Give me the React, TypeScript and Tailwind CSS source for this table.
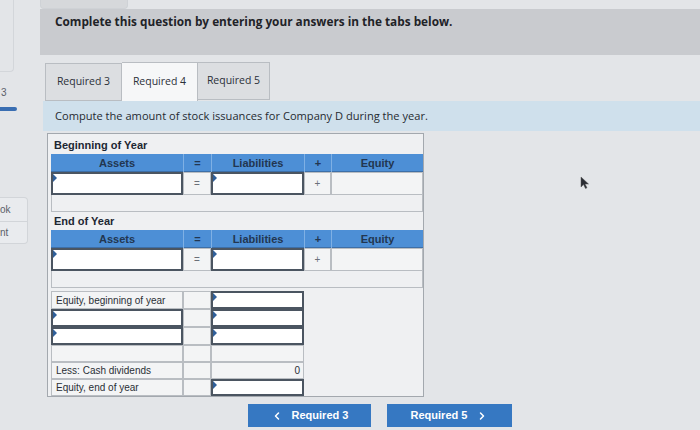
import React from "react";
import { ChevronLeft, ChevronRight } from "lucide-react";

const cols = "grid grid-cols-[132px_28px_93px_27px_92px]";

const Marker = (): React.JSX.Element => (
    <span className="absolute left-0 top-0 w-0 h-0 border-t-[4px] border-b-[4px] border-l-[4px] border-t-transparent border-b-transparent border-l-[#2f5f9a]" />
);

const Input = ({ className = "" }: { className?: string }): React.JSX.Element => (
    <div className={`relative bg-white border-2 border-[#4b5561] ${className}`}>
        <Marker />
    </div>
);

const Cell = ({ children, className = "" }: { children?: React.ReactNode; className?: string }): React.JSX.Element => (
    <div className={`border border-[#b9bdc2] bg-[#f3f4f5] flex items-center ${className}`}>{children}</div>
);

const Section = ({ title, labelH }: { title: string; labelH: string }): React.JSX.Element => (
    <div>
        <div className={`${labelH} flex items-end pl-[3px] pb-[1px] text-[11px] font-bold text-[#1d2733]`}>{title}</div>
        <div className={`${cols} h-[18px] bg-[#4d8fd6] text-[11px] font-bold text-[#223650] border-b border-[#3d6fa8]`}>
            <div className="flex items-center justify-center">Assets</div>
            <div className="flex items-center justify-center border-l border-[#7fb0e4]">=</div>
            <div className="flex items-center justify-center border-l border-[#7fb0e4]">Liabilities</div>
            <div className="flex items-center justify-center border-l border-[#7fb0e4]">+</div>
            <div className="flex items-start justify-center pt-[1px] border-l border-[#7fb0e4]">Equity</div>
        </div>
        <div className={`${cols} h-[23px] text-[10px] text-[#6b7079]`}>
            <Input />
            <Cell className="justify-center">=</Cell>
            <Input />
            <Cell className="justify-center">+</Cell>
            <Cell />
        </div>
        <div className="h-[17px] border border-t-0 border-[#b9bdc2] bg-[#eff0f2]" />
    </div>
);

const App = (): React.JSX.Element => {
    return (
        <div className="relative w-[700px] h-[430px] overflow-hidden bg-[#e3e5e8] flex font-['Liberation_Sans',Arial,sans-serif] text-[#22272e]">
            {/* left rail */}
            <div className="w-[43px] shrink-0 flex flex-col text-[10px] text-[#5b6068]">
                <div className="h-[72px] w-[14px] border-r border-b border-[#d3d6da] rounded-br" />
                <div className="pt-[16px] pl-[1px] leading-none">3</div>
                <div className="mt-[9px] w-[17px] h-[4px] rounded-r bg-[#3a6eb2]" />
                <div className="mt-[86px] w-[28px] border border-l-0 border-[#d2d5d9] rounded-r bg-[#e9ebee]">
                    <div className="h-[23px] flex items-center">ok</div>
                    <div className="h-[22px] flex items-center border-t border-[#d2d5d9]">nt</div>
                </div>
            </div>

            <div className="flex-1 flex flex-col">
                <div className="h-[9px] w-[88px] -ml-[3px] bg-[#d6d8db] rounded-b border border-t-0 border-[#cfd2d6]" />
                <div className="h-[46px] -ml-[3px] bg-[#c9cbcf] pl-[15px] pt-[4px] font-['Open_Sans',sans-serif] font-bold text-[11.8px] text-[#1f2328]">
                    Complete this question by entering your answers in the tabs below.
                </div>
                <div className="h-[7px]" />
                <div className="flex items-end h-[39px] pl-[2px] font-['Open_Sans',sans-serif] text-[10.5px] text-[#2b3038]">
                    <div className="w-[77px] h-[38px] flex items-center justify-center bg-[#dcdee1] border border-[#b9bdc2]">Required 3</div>
                    <div className="w-[76px] h-[39px] flex items-center justify-center bg-[#f6f7f8] border border-b-0 border-[#b9bdc2] border-l-0">Required 4</div>
                    <div className="w-[72px] h-[38px] flex items-center justify-center bg-[#dcdee1] border border-[#b9bdc2] border-l-0 mb-[1px]">Required 5</div>
                </div>
                <div className="h-[30px] bg-[#cfe0ec] pl-[12px] flex items-center font-['Open_Sans',sans-serif] text-[11.1px] text-[#262b31]">
                    Compute the amount of stock issuances for Company D during the year.
                </div>

                <div className="ml-[4px] mt-[2px] w-[377px] border border-[#a3a8ae] bg-[#eff0f2] pl-[3px] pb-[1px]">
                    <Section title="Beginning of Year" labelH="h-[20px]" />
                    <Section title="End of Year" labelH="h-[18px]" />
                    <div className="h-[3px]" />
                    <div className="text-[10px] text-[#2a2f36]">
                        <div className={`${cols} h-[18px]`}>
                            <Cell className="pl-[4px]">Equity, beginning of year</Cell>
                            <Cell />
                            <Input />
                        </div>
                        <div className={`${cols} h-[18px]`}>
                            <Input />
                            <Cell />
                            <Input />
                        </div>
                        <div className={`${cols} h-[18px]`}>
                            <Input />
                            <Cell />
                            <Input />
                        </div>
                        <div className={`${cols} h-[17px]`}>
                            <Cell />
                            <Cell />
                            <Cell />
                        </div>
                        <div className={`${cols} h-[17px]`}>
                            <Cell className="pl-[4px]">Less: Cash dividends</Cell>
                            <Cell />
                            <Cell className="justify-end pr-[3px]">0</Cell>
                        </div>
                        <div className={`${cols} h-[16px]`}>
                            <Cell className="pl-[4px]">Equity, end of year</Cell>
                            <Cell />
                            <Input />
                        </div>
                    </div>
                </div>

                <div className="flex gap-[16px] pl-[205px] mt-[7px] text-[11px] font-bold text-white">
                    <div className="w-[123px] h-[23px] bg-[#3678c2] flex items-center justify-center gap-[9px]">
                        <ChevronLeft size={12} strokeWidth={3} />
                        <span>Required 3</span>
                    </div>
                    <div className="w-[125px] h-[23px] bg-[#3678c2] flex items-center justify-center gap-[9px]">
                        <span>Required 5</span>
                        <ChevronRight size={12} strokeWidth={3} />
                    </div>
                </div>
            </div>

            {/* mouse pointer */}
            <svg className="absolute left-[580px] top-[176px]" width="9" height="13" viewBox="0 0 9 13">
                <path d="M1 1 L1 11 L3.5 8.5 L5.5 12.5 L7 11.8 L5 8 L8.5 8 Z" fill="#2a2d33" stroke="#555" strokeWidth="0.5" />
            </svg>
        </div>
    );
};

export default App;
